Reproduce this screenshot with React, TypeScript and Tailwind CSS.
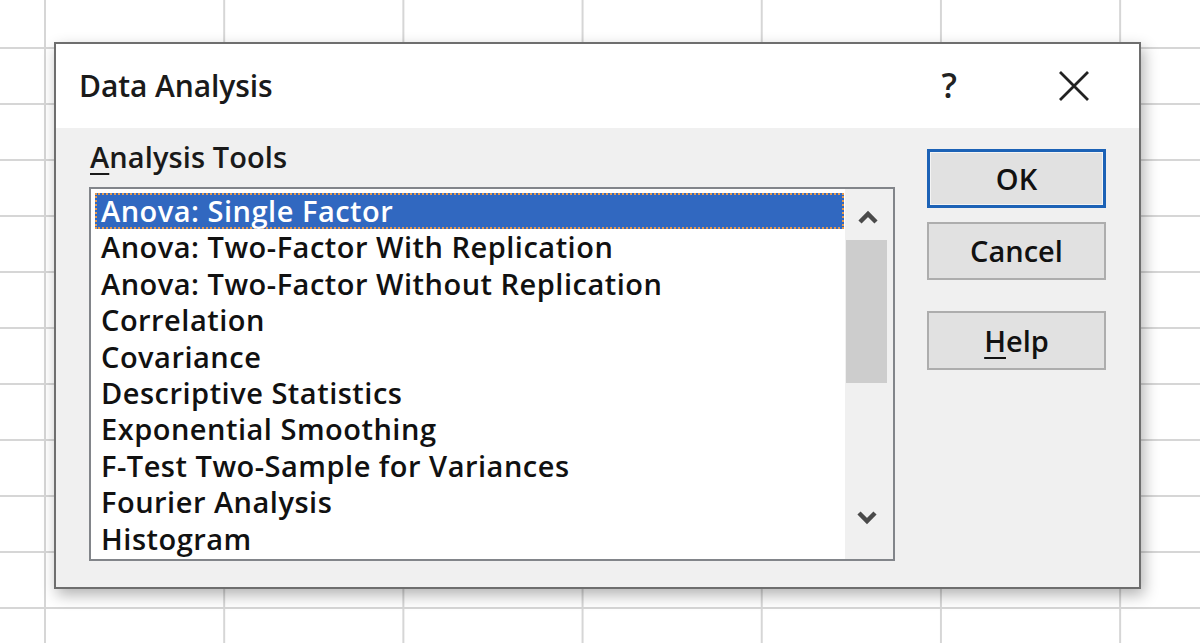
import React from "react";

const items = [
  "Anova: Single Factor",
  "Anova: Two-Factor With Replication",
  "Anova: Two-Factor Without Replication",
  "Correlation",
  "Covariance",
  "Descriptive Statistics",
  "Exponential Smoothing",
  "F-Test Two-Sample for Variances",
  "Fourier Analysis",
  "Histogram",
];

const font = { fontFamily: '"Open Sans", "Noto Sans", "Liberation Sans", sans-serif' };

function Chevron({ up }: { up?: boolean }) {
  return (
    <svg width="22" height="14" viewBox="0 0 22 14">
      <path
        d={up ? "M3 12 L11 4 L19 12" : "M3 2 L11 10 L19 2"}
        fill="none"
        stroke="#4a4a4a"
        strokeWidth="4.5"
        strokeLinejoin="miter"
      />
    </svg>
  );
}

export default function App() {
  return (
    <div
      className="w-[1200px] h-[643px] overflow-hidden bg-white bg-[linear-gradient(to_right,#d6d6d6_2px,transparent_2px),linear-gradient(to_bottom,#d6d6d6_2px,transparent_2px)] bg-[size:179.2px_56px] bg-[position:44px_47px] pt-[42px] pl-[54px]"
      style={font}
    >
      <div className="w-[1087px] h-[547px] border-2 border-[#6e6e6e] bg-[#f0f0f0] shadow-[3px_6px_14px_rgba(0,0,0,0.3)] flex flex-col">
        {/* Title bar */}
        <div className="h-[84px] bg-white flex items-center pl-[23px] pr-[50px]">
          <div className="text-[30px] font-semibold text-[#1a1a1a] tracking-[-0.1px] flex-1 pb-[2px]">Data Analysis</div>
          <div className="text-[34px] font-semibold text-[#222] mr-[102px] pb-[3px] leading-none">?</div>
          <svg width="30" height="30" viewBox="0 0 30 30">
            <path d="M1 1 L29 29 M29 1 L1 29" stroke="#222" strokeWidth="2.8" />
          </svg>
        </div>
        {/* Body */}
        <div className="flex-1 flex pl-[33px] pt-[12px]">
          <div className="flex flex-col">
            <div className="text-[29px] font-semibold text-[#1a1a1a] h-[33px] leading-[33px] ml-[1px] tracking-[0.1px]">
              <span className="underline decoration-2 underline-offset-[5px]">A</span>nalysis Tools
            </div>
            <div className="mt-[14px] w-[806px] h-[374px] border-2 border-[#82858a] bg-white flex">
              <div className="flex-1 pt-[4px] pl-[4px] pr-[1px]">
                {items.map((it, i) => (
                  <div
                    key={it}
                    className={
                      i === 0
                        ? "h-[36.4px] leading-[32px] pl-[4px] text-[29px] font-semibold tracking-[0.5px] text-white bg-[#3168c0] border-2 border-dotted border-[#e59a4e] whitespace-nowrap"
                        : "h-[36.4px] leading-[36px] pl-[6px] text-[29px] font-semibold tracking-[0.5px] text-[#111] whitespace-nowrap"
                    }
                  >
                    {it}
                  </div>
                ))}
              </div>
              <div className="w-[48px] bg-[#f0f0f0] flex flex-col items-center">
                <div className="h-[51px] flex items-center justify-center pt-[4px] pr-[2px]">
                  <Chevron up />
                </div>
                <div className="w-[41px] h-[143px] bg-[#cdcdcd] mr-[6px]" />
                <div className="flex-1" />
                <div className="h-[50px] flex items-start justify-center pt-[2px] pr-[4px]">
                  <Chevron />
                </div>
              </div>
            </div>
          </div>
          <div className="flex flex-col ml-[32px] pt-[9px]">
            <button className="w-[179px] h-[59px] border-[3px] border-[#1c62b6] bg-[#e1e1e1] text-[29px] font-semibold text-[#111] flex items-center justify-center">
              <span className="border border-[#f4f4f4] w-full h-full flex items-center justify-center pt-[1px]">OK</span>
            </button>
            <button className="mt-[14px] w-[179px] h-[58px] border-2 border-[#adadad] bg-[#e1e1e1] text-[29px] font-semibold text-[#111]">
              Cancel
            </button>
            <button className="mt-[31px] w-[179px] h-[59px] border-2 border-[#adadad] bg-[#e1e1e1] text-[29px] font-semibold text-[#111]">
              <span className="underline decoration-2 underline-offset-[5px]">H</span>elp
            </button>
          </div>
        </div>
      </div>
    </div>
  );
}
